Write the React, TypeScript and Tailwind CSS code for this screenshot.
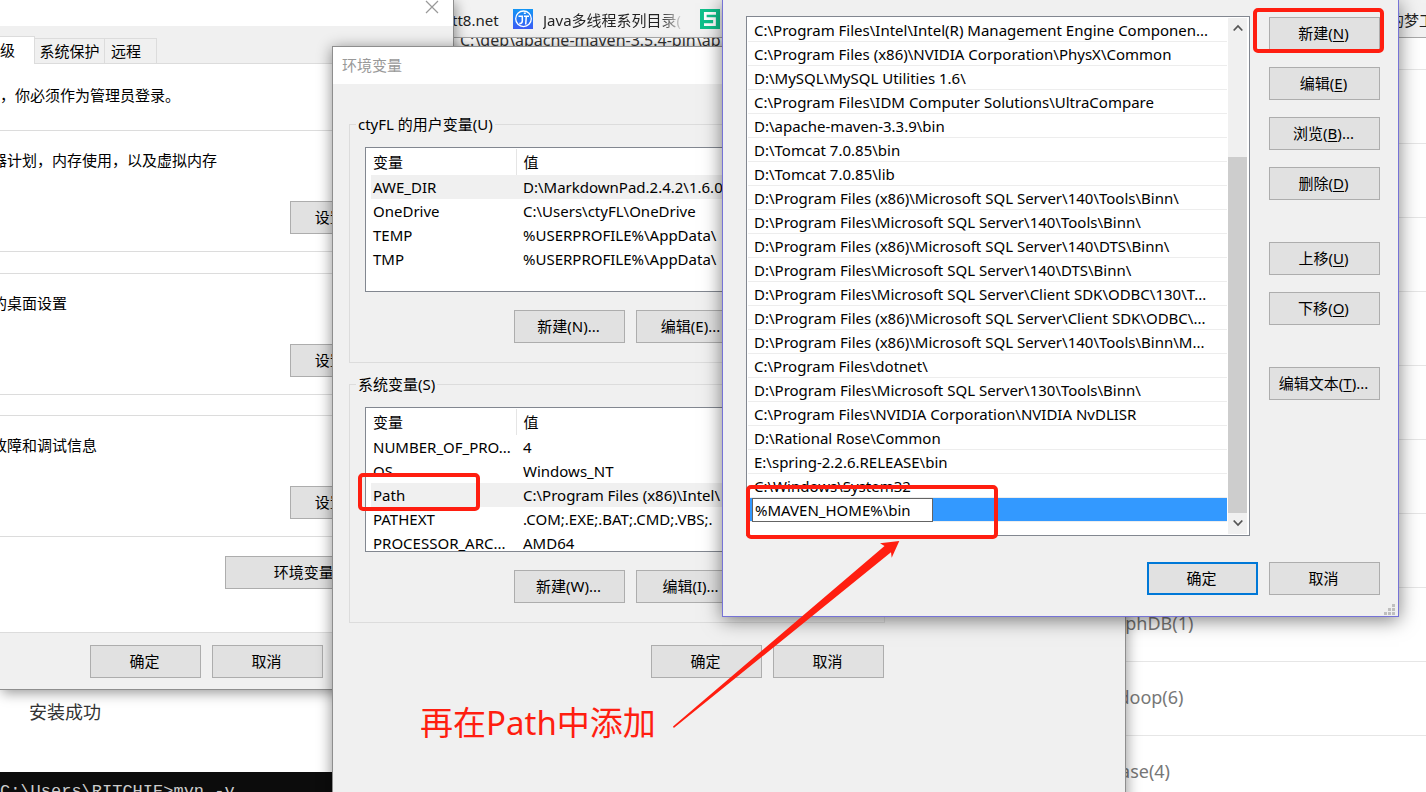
import React from "react";

type ButtonProps = { children: React.ReactNode; wide?: boolean; primary?: boolean };

function WinButton({ children, wide, primary }: ButtonProps) {
  return (
    <button
      type="button"
      className={
        "flex h-[33px] shrink-0 items-center justify-center whitespace-nowrap bg-[#e1e1e1] pr-[2px] pb-[2px] text-[15px] leading-5 text-black " +
        (wide ? "w-[192px] " : "w-[111px] ") +
        (primary ? "border-2 border-[#0078d7]" : "border border-[#adadad]")
      }
    >
      {children}
    </button>
  );
}

function Key({ k, more }: { k: string; more?: boolean }) {
  return (
    <span>
      (<span className="underline underline-offset-2">{k}</span>){more ? "..." : ""}
    </span>
  );
}

const categories = ["", "", "", "", "", "", "", "", "GraphDB(1)", "Hadoop(6)", "HBase(4)"];

function BrowserPage() {
  return (
    <div className="flex h-screen flex-col overflow-hidden bg-white">
      <div className="flex h-[38px] shrink-0 items-center border-b border-[#a9a9a9] bg-[#f2f2f2] pl-[452px] text-[15px] leading-5 text-[#222]">
        <a href="#itt8" className="w-[61px] shrink-0 pt-[3px] whitespace-nowrap">tt8.net</a>
        <svg className="size-5 shrink-0" viewBox="0 0 20 20" aria-hidden="true">
          <defs>
            <linearGradient id="jg" x1="0" y1="0" x2="0" y2="1">
              <stop offset="0" stopColor="#1296f5" />
              <stop offset="1" stopColor="#3b5bf5" />
            </linearGradient>
          </defs>
          <rect width="20" height="20" fill="url(#jg)" />
          <circle cx="10.500" cy="9.800" r="7.800" fill="none" stroke="#fff" strokeWidth="1.300" />
          <path d="M5.500 7.200H9.300V12q0 2.600-3 2.600M11 7.200h5M13.300 7.200l-.6 8.300M10.800 4.300h2" fill="none" stroke="#fff" strokeWidth="1.500" />
        </svg>
        <a
          href="#java"
          className="ml-[10px] w-[157px] shrink-0 bg-gradient-to-r from-[#222] from-75% to-transparent to-90% bg-clip-text pt-[3px] whitespace-nowrap text-transparent"
        >
          Java多线程系列目录(
        </a>
        <svg className="size-5 shrink-0" viewBox="0 0 20 20" aria-hidden="true">
          <rect width="20" height="20" fill="#0fc08a" />
          <path d="M16 4.300H5.300v5.400h9.200v6H4" fill="none" stroke="#fff" strokeWidth="2.700" />
        </svg>
        <a href="#dream" className="ml-[669px] shrink-0 pt-[3px] whitespace-nowrap">的梦工</a>
      </div>
      <div className="flex min-h-0 flex-1 justify-between">
        <main className="flex w-[740px] shrink-0 flex-col overflow-hidden text-[#333]">
          <p className="-mt-[10px] pl-[460px] text-[16px] leading-6 whitespace-nowrap">C:\dep\apache-maven-3.5.4-bin\ap</p>
          <p className="mt-auto pl-[29px] text-[18px] leading-6">安装成功</p>
          <pre className="mt-12 h-5 shrink-0 overflow-hidden bg-[#0c0c0c] pt-[8px] font-['Liberation_Mono',monospace] text-[17px] leading-6 text-[#ccc]">
            C:\Users\RITCHIE&gt;mvn -v
          </pre>
        </main>
        <ul className="-mt-[42px] flex w-[331px] shrink-0 flex-col text-[18px] text-[#777]">
          {categories.map((c, i) => (
            <li key={i} className="h-[74px] shrink-0 border-b border-[#e6e6e6] pt-[21px] leading-7">
              {c}
            </li>
          ))}
        </ul>
      </div>
    </div>
  );
}

function SettingsGroup({ text, k, className }: { text: string; k: string; className: string }) {
  return (
    <section className={"flex flex-col border-y border-[#dcdcdc] " + className}>
      <p className="whitespace-nowrap">{text}</p>
      <div className="mt-auto mb-[17px] pl-[290px]">
        <WinButton>设置({k})...</WinButton>
      </div>
    </section>
  );
}

function SystemProperties() {
  return (
    <section className="absolute top-0 left-0 flex h-[690px] w-[454px] flex-col overflow-hidden border-r border-b border-[#8e8e8e] bg-[#f0f0f0] shadow-[2px_3px_12px_rgba(0,0,0,0.4)]">
      <div className="flex h-[26px] shrink-0 justify-end bg-white pr-[14px]">
        <button type="button" aria-label="关闭" className="size-[14px]">
          <svg viewBox="0 0 14 14" className="size-[14px]">
            <path d="M1 1l12 12M13 1L1 13" stroke="#999" strokeWidth="1.200" />
          </svg>
        </button>
      </div>
      <div role="tablist" className="flex h-[38px] shrink-0 items-end border-b border-[#dcdcdc]">
        <button type="button" role="tab" aria-selected="true" className="-mb-px h-7 w-[35px] border-t border-r border-[#dcdcdc] bg-white pb-[2px] text-left">级</button>
        <button type="button" role="tab" className="h-[25px] w-[70px] border-t border-r border-[#dcdcdc] text-center whitespace-nowrap">系统保护</button>
        <button type="button" role="tab" className="h-[25px] w-[52px] border-t border-r border-[#dcdcdc] pl-[6px] text-left">远程</button>
      </div>
      <div className="flex h-[569px] shrink-0 flex-col border-b border-[#dcdcdc] bg-white">
        <p className="mt-[21px] mb-[25px]">，你必须作为管理员登录。</p>
        <SettingsGroup text="器计划，内存使用，以及虚拟内存" k="S" className="h-[122px] pt-[19px] [&>p]:-ml-[8px]" />
        <SettingsGroup text="的桌面设置" k="E" className="mt-[21px] h-[122px] pt-[19px] [&>p]:-ml-[8px]" />
        <SettingsGroup text="故障和调试信息" k="T" className="mt-[20px] h-[122px] pt-[19px] [&>p]:-ml-[8px]" />
        <div className="mt-[19px] pl-[225px]">
          <WinButton wide>环境变量(N)...</WinButton>
        </div>
      </div>
      <div className="flex gap-[11px] pt-[12px] pl-[90px]">
        <WinButton>确定</WinButton>
        <WinButton>取消</WinButton>
      </div>
    </section>
  );
}

type Row = [string, string];

const userVars: Row[] = [
  ["AWE_DIR", "D:\\MarkdownPad.2.4.2\\1.6.0"],
  ["OneDrive", "C:\\Users\\ctyFL\\OneDrive"],
  ["TEMP", "%USERPROFILE%\\AppData\\"],
  ["TMP", "%USERPROFILE%\\AppData\\"],
];

const systemVars: Row[] = [
  ["NUMBER_OF_PRO...", "4"],
  ["OS", "Windows_NT"],
  ["Path", "C:\\Program Files (x86)\\Intel\\"],
  ["PATHEXT", ".COM;.EXE;.BAT;.CMD;.VBS;."],
  ["PROCESSOR_ARC...", "AMD64"],
];

function VariableGroup({ title, rows, selected, keys }: { title: string; rows: Row[]; selected: number; keys: [string, string] }) {
  return (
    <fieldset className="h-[249px] w-[536px] border border-[#dcdcdc] px-[15px]">
      <legend className="-ml-[9px] h-5 px-[2px]">{title}</legend>
      <div className="mt-[13px] h-[145px] overflow-hidden border border-[#828790] bg-white pt-px pl-[5px]">
        <table className="w-full table-fixed border-collapse text-left">
          <thead>
            <tr className="h-[26px]">
              <th className="w-[145px] border-r border-[#e5e5e5] pl-[2px] font-normal">变量</th>
              <th className="pl-[7px] font-normal">值</th>
            </tr>
          </thead>
          <tbody>
            {rows.map(([name, value], i) => (
              <tr key={name} className={i === selected ? "h-6 bg-[#f0f0f0]" : "h-6"}>
                <td className="p-0 pl-[2px] whitespace-nowrap">{name}</td>
                <td className="p-0 pl-[7px] whitespace-nowrap">{value}</td>
              </tr>
            ))}
          </tbody>
        </table>
      </div>
      <div className="mt-[18px] flex gap-[11px] pl-[149px]">
        <WinButton>新建({keys[0]})...</WinButton>
        <WinButton>编辑({keys[1]})...</WinButton>
      </div>
    </fieldset>
  );
}

function EnvironmentVariables() {
  return (
    <section className="absolute top-[46px] left-[332px] flex h-[760px] w-[794px] flex-col border border-[#8e8e8e] bg-[#f0f0f0] shadow-[0_2px_14px_rgba(0,0,0,0.45)]">
      <h2 className="flex h-[37px] shrink-0 items-center bg-white pb-px pl-[9px] text-[#999]">环境变量</h2>
      <div className="flex flex-col gap-[11px] pt-[30px] pl-4">
        <VariableGroup title="ctyFL 的用户变量(U)" rows={userVars} selected={0} keys={["N", "E"]} />
        <VariableGroup title="系统变量(S)" rows={systemVars} selected={2} keys={["W", "I"]} />
      </div>
      <div className="mt-[22px] flex gap-[11px] pl-[318px]">
        <WinButton>确定</WinButton>
        <WinButton>取消</WinButton>
      </div>
    </section>
  );
}

const paths = [
  "C:\\Program Files\\Intel\\Intel(R) Management Engine Componen...",
  "C:\\Program Files (x86)\\NVIDIA Corporation\\PhysX\\Common",
  "D:\\MySQL\\MySQL Utilities 1.6\\",
  "C:\\Program Files\\IDM Computer Solutions\\UltraCompare",
  "D:\\apache-maven-3.3.9\\bin",
  "D:\\Tomcat 7.0.85\\bin",
  "D:\\Tomcat 7.0.85\\lib",
  "D:\\Program Files (x86)\\Microsoft SQL Server\\140\\Tools\\Binn\\",
  "D:\\Program Files\\Microsoft SQL Server\\140\\Tools\\Binn\\",
  "D:\\Program Files (x86)\\Microsoft SQL Server\\140\\DTS\\Binn\\",
  "D:\\Program Files\\Microsoft SQL Server\\140\\DTS\\Binn\\",
  "D:\\Program Files\\Microsoft SQL Server\\Client SDK\\ODBC\\130\\T...",
  "D:\\Program Files (x86)\\Microsoft SQL Server\\Client SDK\\ODBC\\...",
  "D:\\Program Files (x86)\\Microsoft SQL Server\\140\\Tools\\Binn\\M...",
  "C:\\Program Files\\dotnet\\",
  "D:\\Program Files\\Microsoft SQL Server\\130\\Tools\\Binn\\",
  "C:\\Program Files\\NVIDIA Corporation\\NVIDIA NvDLISR",
  "D:\\Rational Rose\\Common",
  "E:\\spring-2.2.6.RELEASE\\bin",
  "C:\\Windows\\System32",
];

function PathEditor() {
  return (
    <section className="absolute top-0 left-[722px] flex h-[617px] w-[677px] flex-col border border-t-0 border-[#7673d6] bg-[#f0f0f0] pt-4 pl-[23px] shadow-[0_3px_18px_rgba(0,0,0,0.5)]">
      <div className="flex gap-[19px]">
        <div className="flex h-[520px] w-[504px] border border-[#828790] bg-white p-px pr-[2px]">
          <ul className="flex w-[480px] flex-col">
            {paths.map((p) => (
              <li key={p} className="h-6 border-b border-[#ededed] pl-[6px] leading-6 whitespace-nowrap">
                {p}
              </li>
            ))}
            <li className="flex h-6 border-b border-[#ededed] bg-[#3399ff] bg-clip-padding pl-1">
              <input
                aria-label="路径"
                defaultValue="%MAVEN_HOME%\bin"
                className="h-6 w-[181px] border border-[#646464] bg-white pl-[2px] outline-none"
              />
            </li>
          </ul>
          <div className="ml-px flex w-[19px] flex-col items-center bg-[#f0f0f0] py-[6px]">
            <svg className="h-2 w-[10px] shrink-0" viewBox="0 0 10 8" aria-hidden="true">
              <path d="M0.700 6.500L5 2l4.300 4.500" fill="none" stroke="#555" strokeWidth="1.800" />
            </svg>
            <div className="mt-[125px] h-[356px] w-full shrink-0 bg-[#cdcdcd]" />
            <svg className="mt-[6px] h-2 w-[10px] shrink-0" viewBox="0 0 10 8" aria-hidden="true">
              <path d="M0.700 1.500L5 6l4.300-4.500" fill="none" stroke="#555" strokeWidth="1.800" />
            </svg>
          </div>
        </div>
        <div className="flex flex-col pt-px">
          <div className="flex flex-col gap-[17px]">
            <WinButton>新建<Key k="N" /></WinButton>
            <WinButton>编辑<Key k="E" /></WinButton>
            <WinButton>浏览<Key k="B" more /></WinButton>
            <WinButton>删除<Key k="D" /></WinButton>
          </div>
          <div className="mt-[42px] flex flex-col gap-[17px]">
            <WinButton>上移<Key k="U" /></WinButton>
            <WinButton>下移<Key k="O" /></WinButton>
          </div>
          <div className="mt-[42px]">
            <WinButton>编辑文本<Key k="T" more /></WinButton>
          </div>
        </div>
      </div>
      <div className="mt-[26px] flex gap-[11px] pl-[401px]">
        <WinButton primary>确定</WinButton>
        <WinButton>取消</WinButton>
      </div>
      <svg className="mt-auto mr-[3px] mb-px h-[11px] w-[11px] self-end" viewBox="0 0 11 11" aria-hidden="true">
        <path d="M8 0h3v3H8zM4 4h3v3H4zM8 4h3v3H8zM0 8h3v3H0zM4 8h3v3H4zM8 8h3v3H8z" fill="#bfbfbf" />
      </svg>
    </section>
  );
}

function Annotations() {
  return (
    <div className="pointer-events-none absolute inset-0">
      <div className="absolute top-[8px] left-[1253px] h-[45px] w-[131px] rounded-[5px] border-4 border-[#ff1e10]" />
      <div className="absolute top-[473px] left-[358px] h-[38px] w-[122px] rounded-[5px] border-4 border-[#ff1e10]" />
      <div className="absolute top-[485px] left-[746px] h-[54px] w-[252px] rounded-[5px] border-4 border-[#ff1e10]" />
      <svg className="absolute top-[540px] left-[672px] h-[190px] w-[230px]" viewBox="0 0 230 190" aria-hidden="true">
        <path d="M1 186.500L212.500 6L208 3.300L227.300 1L219.700 17.700L219 12.300L1.800 188Z" fill="#ff1e10" />
      </svg>
      <p className="absolute top-[698px] left-[420px] text-[33px] leading-[50px] whitespace-nowrap text-[#ff1e10]">再在Path中添加</p>
    </div>
  );
}

export default function App() {
  return (
    <div className="relative h-screen w-full overflow-hidden font-['Noto_Sans','Noto_Sans_CJK_SC',sans-serif] text-[15px] leading-5 text-black">
      <BrowserPage />
      <SystemProperties />
      <EnvironmentVariables />
      <PathEditor />
      <Annotations />
    </div>
  );
}
